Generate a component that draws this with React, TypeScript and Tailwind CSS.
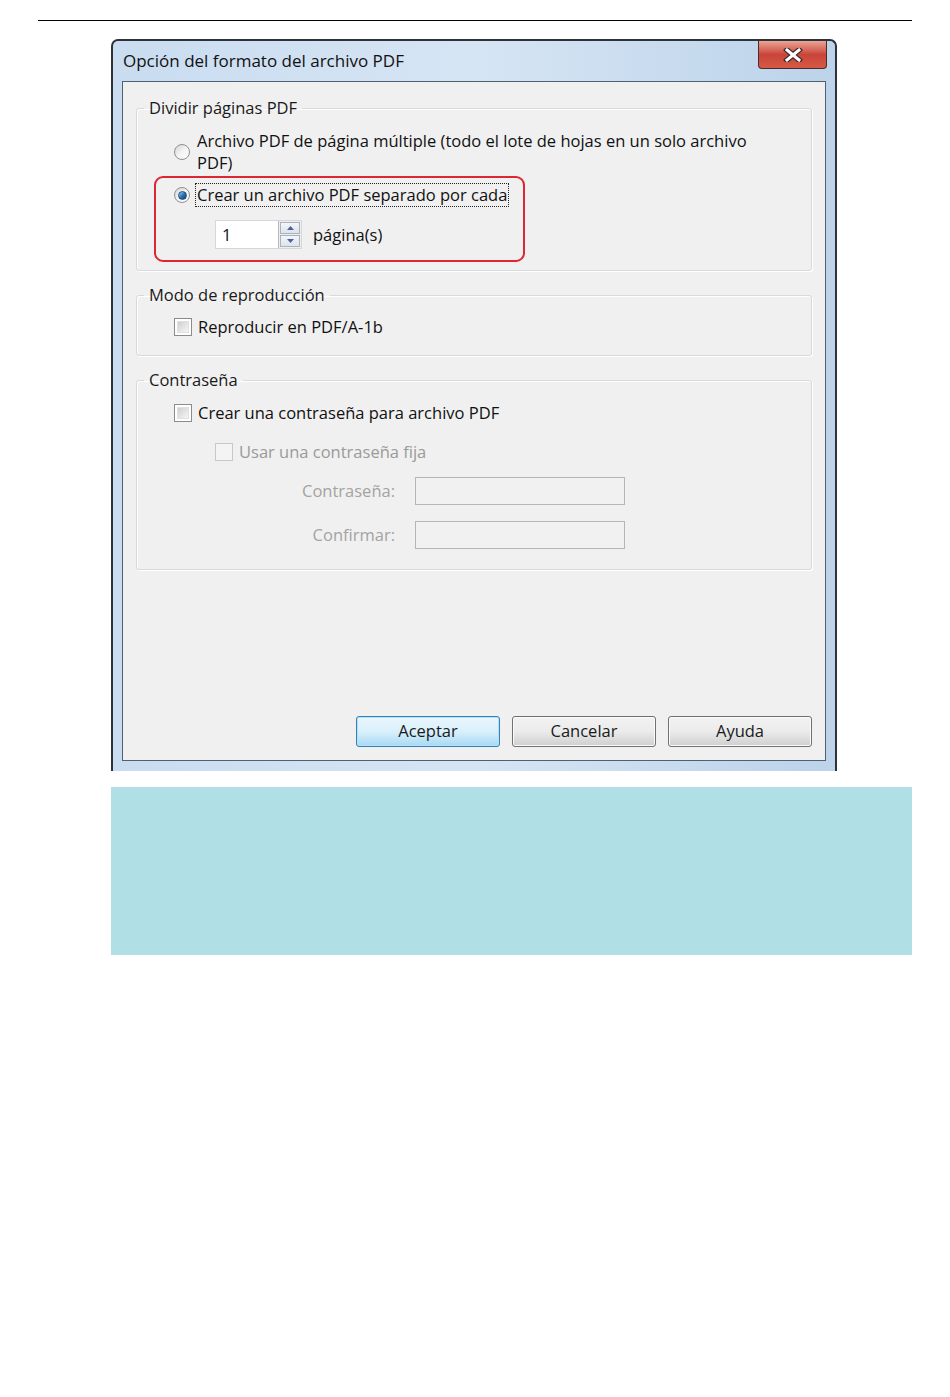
import React from "react";

const font = { fontFamily: '"Open Sans", "Noto Sans", sans-serif' };

function Radio({ checked }: { checked?: boolean }) {
  return (
    <span className="w-[16px] h-[16px] rounded-full border border-[#8e8f8f] bg-gradient-to-br from-[#d4d4d4] via-[#f4f4f4] to-[#ffffff] flex items-center justify-center shrink-0">
      {checked && (
        <span className="w-[9px] h-[9px] rounded-full bg-gradient-to-br from-[#a6d6f5] via-[#2a74b6] to-[#0d3f70] border border-[#1d4f82]" />
      )}
    </span>
  );
}

function Check({ disabled }: { disabled?: boolean }) {
  return (
    <span
      className={`w-[18px] h-[18px] border shrink-0 flex items-center justify-center ${
        disabled ? "border-[#c8c8c8] bg-[#f4f4f4]" : "border-[#8b8b8b] bg-white"
      }`}
    >
      {!disabled && <span className="w-[12px] h-[12px] bg-gradient-to-br from-[#cfcfcf] to-[#f6f6f6] border border-[#e0e0e0]" />}
    </span>
  );
}

function Group({ title, className, children }: { title: string; className: string; children?: React.ReactNode }) {
  return (
    <fieldset className={`border border-[#d5dadf] rounded-[3px] shadow-[inset_1px_1px_0_#ffffff,1px_1px_0_#ffffff] mx-[13px] relative ${className}`}>
      <legend className="ml-[7px] px-[5px] text-[16.5px] leading-[20px] text-[#1a1a1a]">{title}</legend>
      {children}
    </fieldset>
  );
}

function Button({ label, primary }: { label: string; primary?: boolean }) {
  return (
    <button
      className={`w-[144px] h-[31px] rounded-[3px] border text-[16.5px] text-[#1a1a1a] bg-gradient-to-b ${
        primary
          ? "border-[#3c7fb1] from-[#eaf6fd] via-[#d9f0fc] to-[#a7d9f5] shadow-[inset_0_0_0_1px_#aee3fb]"
          : "border-[#707070] from-[#f2f2f2] via-[#ebebeb] to-[#cfcfcf] shadow-[inset_0_0_0_1px_#fbfbfb]"
      }`}
    >
      {label}
    </button>
  );
}

export default function App() {
  return (
    <div className="w-[950px] h-[1397px] bg-white overflow-hidden" style={font}>
      <div className="ml-[38px] mt-[20px] w-[874px] h-px bg-black" />

      {/* dialog window */}
      <div className="ml-[111px] mt-[18px] w-[726px] h-[732px] rounded-t-[7px] border-x-2 border-t-2 border-[#2d3238] bg-gradient-to-r from-[#c9dcf0] via-[#d6e5f4] to-[#bcd3ea] flex flex-col">
        <div className="h-[40px] flex items-start justify-between">
          <span className="ml-[10px] mt-[10px] text-[17px] leading-[20px] text-[#111]">Opción del formato del archivo PDF</span>
          <div className="mr-[8px] w-[69px] h-[28px] rounded-b-[4px] border border-t-0 border-[#4a2a2a] bg-gradient-to-b from-[#e9a496] via-[#c9443a] to-[#d55a45] flex items-center justify-center">
            <svg width="20" height="14" viewBox="0 0 20 14">
              <path d="M4 2 L16 12 M16 2 L4 12" stroke="#3a2a2a" strokeWidth="5.5" strokeLinecap="square" />
              <path d="M4 2 L16 12 M16 2 L4 12" stroke="#ffffff" strokeWidth="3" strokeLinecap="square" />
            </svg>
          </div>
        </div>

        {/* client area */}
        <div className="mx-[9px] mb-[10px] flex-1 border border-[#51606f] bg-[#f0f0f0] flex flex-col">
          <Group title="Dividir páginas PDF" className="mt-[16px] h-[173px]">
            <div className="pl-[37px] pt-[12px] text-[16.5px] leading-[22px] text-[#111]">
              <div className="flex items-start gap-[7px]">
                <span className="mt-[14px]"><Radio /></span>
                <span className="w-[570px]">Archivo PDF de página múltiple (todo el lote de hojas en un solo archivo PDF)</span>
              </div>
              <div className="mt-[10px] flex items-center gap-[6px]">
                <Radio checked />
                <span className="outline-1 outline-dotted outline-[#222] px-[1px]">Crear un archivo PDF separado por cada</span>
              </div>
              <div className="mt-[14px] ml-[41px] flex items-center gap-[11px]">
                <div className="w-[87px] h-[29px] border border-[#d7d7d7] bg-white flex">
                  <span className="flex-1 pl-[6px] leading-[27px]">1</span>
                  <div className="w-[23px] flex flex-col border-l border-[#b9b9b9] bg-[#eeeeee] p-[1px] gap-[1px]">
                    <span className="flex-1 border border-[#a8b2c2] bg-gradient-to-b from-[#f4f6fa] to-[#dde3ec] flex items-center justify-center">
                      <svg width="7" height="4" viewBox="0 0 7 4"><path d="M0 4 L3.5 0 L7 4 Z" fill="#4c6391" /></svg>
                    </span>
                    <span className="flex-1 border border-[#a8b2c2] bg-gradient-to-b from-[#f4f6fa] to-[#dde3ec] flex items-center justify-center">
                      <svg width="7" height="4" viewBox="0 0 7 4"><path d="M0 0 L3.5 4 L7 0 Z" fill="#4c6391" /></svg>
                    </span>
                  </div>
                </div>
                <span>página(s)</span>
              </div>
            </div>
            <div className="absolute left-[17px] top-[58px] w-[371px] h-[86px] border-2 border-[#de2533] rounded-[9px]" />
          </Group>

          <Group title="Modo de reproducción" className="mt-[14px] h-[71px]">
            <div className="pl-[37px] pt-[12px] flex items-center gap-[6px] text-[16.5px] leading-[20px] text-[#111]">
              <Check />
              <span>Reproducir en PDF/A-1b</span>
            </div>
          </Group>

          <Group title="Contraseña" className="mt-[14px] h-[200px]">
            <div className="pl-[37px] pt-[13px] text-[16.5px] leading-[20px]">
              <div className="flex items-center gap-[6px] text-[#111]">
                <Check />
                <span>Crear una contraseña para archivo PDF</span>
              </div>
              <div className="mt-[19px] ml-[41px] flex items-center gap-[6px] text-[#9a9a9a]">
                <Check disabled />
                <span>Usar una contraseña fija</span>
              </div>
              <div className="mt-[15px] flex items-center text-[#a3a3a3]">
                <span className="w-[221px] text-right">Contraseña:</span>
                <span className="ml-[20px] w-[210px] h-[28px] border border-[#b5b5b5] bg-[#f1f1f1]" />
              </div>
              <div className="mt-[16px] flex items-center text-[#a3a3a3]">
                <span className="w-[221px] text-right">Confirmar:</span>
                <span className="ml-[20px] w-[210px] h-[28px] border border-[#b5b5b5] bg-[#f1f1f1]" />
              </div>
            </div>
          </Group>

          <div className="mt-auto mb-[13px] mr-[13px] flex justify-end gap-[12px]">
            <Button label="Aceptar" primary />
            <Button label="Cancelar" />
            <Button label="Ayuda" />
          </div>
        </div>
      </div>

      <div className="ml-[111px] mt-[16px] w-[801px] h-[168px] bg-[#b0e0e6]" />
    </div>
  );
}
